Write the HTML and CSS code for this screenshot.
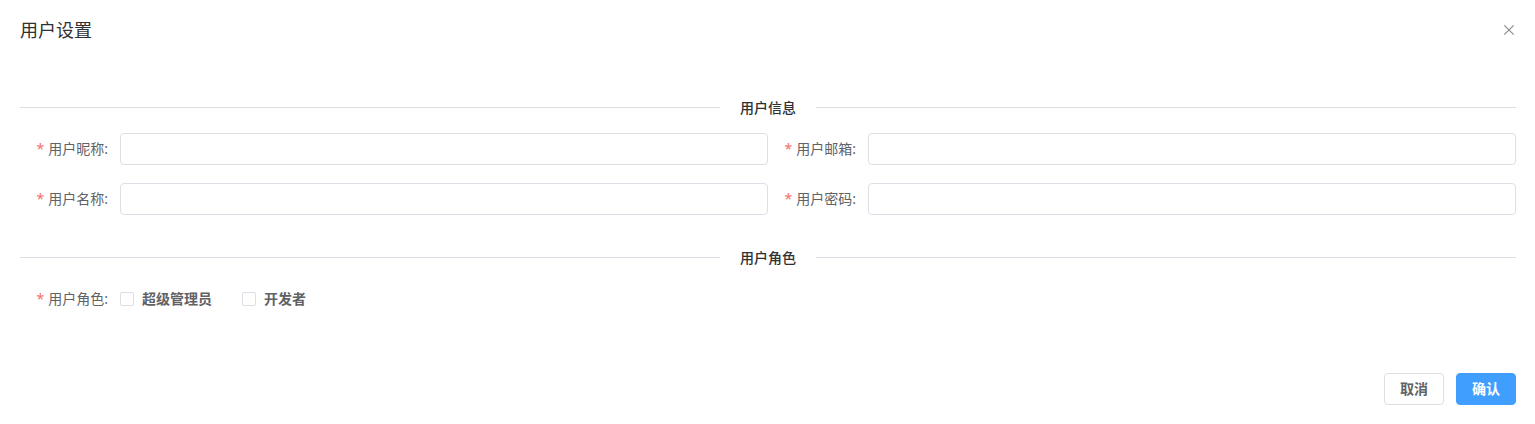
FILE: index.html
```html
<!DOCTYPE html>
<html lang="zh-CN">
<head>
<meta charset="utf-8">
<title>用户设置</title>
<link rel="stylesheet" href="styles.css">
</head>
<body>
<main class="dialog">
  <header class="dialog-header">
    <h1 class="dialog-title">用户设置</h1>
    <button class="dialog-close" type="button" aria-label="关闭">
      <svg viewBox="0 0 16 16" width="16" height="16" aria-hidden="true"><path d="M3.3 3.3l9.4 9.4M12.7 3.3l-9.4 9.4"/></svg>
    </button>
  </header>
  <form class="dialog-form">
    <h2 class="divider">用户信息</h2>
    <div class="fields">
      <div class="field"><label class="label" for="nick">用户昵称:</label><input class="input" id="nick" type="text"></div>
      <div class="field"><label class="label" for="email">用户邮箱:</label><input class="input" id="email" type="email"></div>
      <div class="field"><label class="label" for="name">用户名称:</label><input class="input" id="name" type="text"></div>
      <div class="field"><label class="label" for="pwd">用户密码:</label><input class="input" id="pwd" type="password"></div>
    </div>
    <h2 class="divider">用户角色</h2>
    <div class="field" role="group" aria-labelledby="roles">
      <span class="label" id="roles">用户角色:</span>
      <div class="checks">
        <label class="check"><input class="box" type="checkbox">超级管理员</label>
        <label class="check"><input class="box" type="checkbox">开发者</label>
      </div>
    </div>
    <footer class="actions">
      <button class="button" type="button">取消</button>
      <button class="button button-primary" type="submit">确认</button>
    </footer>
  </form>
</main>
</body>
</html>
```
FILE: styles.css
```css
* { box-sizing: border-box; }

body {
  margin: 0;
  background: #fff;
  color: #606266;
  font: 14px/20px "Noto Sans", "Noto Sans CJK SC", sans-serif;
}

.dialog { padding: 18px 19px 19px 20px; }

.dialog-header {
  display: flex;
  align-items: center;
  justify-content: space-between;
  height: 24px;
}

.dialog-title {
  margin: 0;
  color: #303133;
  font-size: 18px;
  font-weight: 400;
  line-height: 24px;
}

.dialog-close {
  display: flex;
  margin-right: -1px;
  padding: 0;
  border: 0;
  background: none;
}

.dialog-close path {
  fill: none;
  stroke: #85888e;
  stroke-width: 1.1;
}

.dialog-form { padding-top: 55px; }

.divider {
  display: grid;
  grid-template-columns: 1fr auto 1fr;
  align-items: center;
  gap: 20px;
  margin: 0;
  color: #303133;
  font-size: 14px;
  font-weight: 500;
  line-height: 21px;
}

.divider::before,
.divider::after {
  height: 1px;
  background: #dcdfe6;
  content: "";
}

.fields {
  display: grid;
  grid-template-columns: 1fr 1fr;
  row-gap: 18px;
  margin: 15px 0 32px;
}

.field {
  display: flex;
  align-items: center;
  min-height: 32px;
}

.label {
  width: 100px;
  padding-right: 12px;
  text-align: right;
  font-weight: 400;
}

.label::before {
  margin-right: 4px;
  color: #f56c6c;
  content: "*";
}

.input {
  flex: 1;
  min-width: 0;
  height: 32px;
  padding: 0 15px;
  border: 1px solid #dcdfe6;
  border-radius: 4px;
  background: #fff;
  color: #606266;
  font: inherit;
}

.divider + .field { margin-top: 15px; }

.checks {
  display: flex;
  gap: 30px;
}

.check {
  display: flex;
  align-items: center;
  gap: 8px;
  font-weight: 700;
}

.box {
  width: 14px;
  height: 14px;
  margin: 0;
  appearance: none;
  border: 1px solid #dcdfe6;
  border-radius: 2px;
  background: #fff;
}

.box:checked {
  border-color: #409eff;
  background: #409eff;
}

.actions {
  display: flex;
  justify-content: flex-end;
  gap: 12px;
  margin-top: 58px;
}

.button {
  height: 32px;
  padding: 0 15px;
  border: 1px solid #dcdfe6;
  border-radius: 4px;
  background: #fff;
  color: #606266;
  font: inherit;
  font-weight: 700;
}

.button-primary {
  border-color: #409eff;
  background: #409eff;
  color: #fff;
}
```
